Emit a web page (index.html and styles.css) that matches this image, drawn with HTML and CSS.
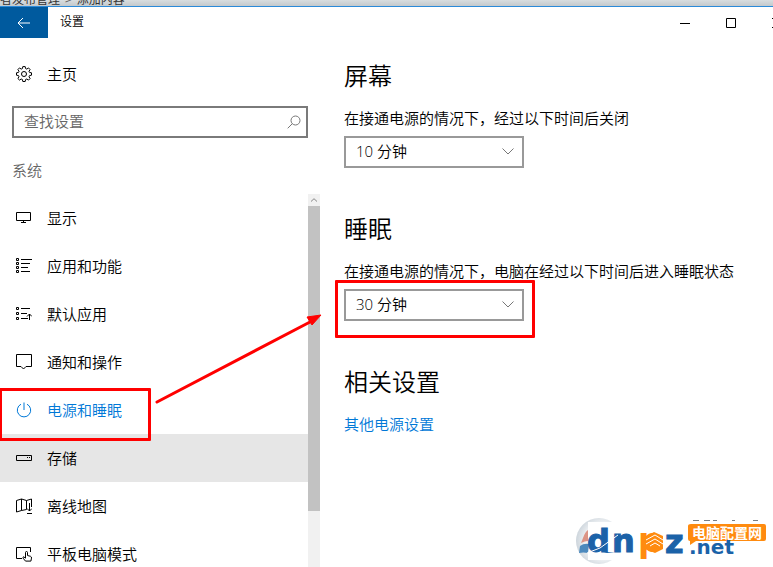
FILE: index.html
```html
<!DOCTYPE html>
<html lang="zh-CN">
<head>
  <meta charset="UTF-8" />
  <meta name="viewport" content="width=device-width, initial-scale=1.0" />
  <title>设置</title>
  <link rel="stylesheet" href="styles.css">
</head>
<body>
  <div class="backdrop"><span>者发布管理</span><span class="crumb">&gt;</span><span>添加内容</span></div>
  <div class="window">
    <header class="titlebar">
      <button class="back" type="button" aria-label="返回">
        <svg width="14" height="12" viewBox="0 0 14 12"><path d="M13 6H1M6 1L1 6l5 5" /></svg>
      </button>
      <span class="title">设置</span>
      <div class="controls">
        <button type="button" aria-label="最小化"><svg width="10" height="10" viewBox="0 0 10 10"><path d="M0 5.500H10" /></svg></button>
        <button type="button" aria-label="最大化"><svg width="10" height="10" viewBox="0 0 10 10"><path d="M.5.500h9v9h-9z" /></svg></button>
        <button type="button" aria-label="关闭"><svg width="10" height="10" viewBox="0 0 10 10"><path d="M0 0L10 10M10 0L0 10" /></svg></button>
      </div>
    </header>

    <div class="columns">
      <aside class="sidebar">
        <a class="item home" href="#">
          <svg class="icon" viewBox="0 0 16 16"><path d="M6.800.6h2.400l.4 2 1.200.5 1.700-1.200 1.600 1.700-1.100 1.700.5 1.100 2 .4v2.400l-2 .4-.5 1.200 1.100 1.700-1.600 1.600-1.700-1.100-1.200.5-.4 2H6.800l-.4-2-1.200-.5-1.700 1.100-1.600-1.600L3 10.800l-.5-1.200-2-.4V6.800l2-.4L3 5.300 1.900 3.600l1.600-1.700 1.700 1.200 1.200-.5z" /><circle cx="8" cy="8" r="2.500" /></svg>
          主页
        </a>
        <form class="search">
          <input type="text" placeholder="查找设置" aria-label="查找设置">
          <button type="button" aria-label="搜索"><svg width="14" height="14" viewBox="0 0 14 14"><circle cx="8.500" cy="5.500" r="4.500" /><path d="M5.300 8.700L.7 13.300" /></svg></button>
        </form>
        <h2 class="group">系统</h2>
        <div class="list">
          <nav>
            <a class="item" href="#">
              <svg class="icon" viewBox="0 0 16 16"><path d="M.5 2.500h14v8H.5zM7.500 11v2M5 12.500h5" /></svg>
              显示
            </a>
            <a class="item" href="#">
              <svg class="icon" viewBox="0 0 16 16"><path d="M.5.500h2v2h-2zM.5 4.500h2v2h-2zM.5 8.500h2v2h-2zM.5 12.500h2v2h-2zM5 1.500h11M5 5.500h9M5 9.500h7M5 13.500h9" /></svg>
              应用和功能
            </a>
            <a class="item" href="#">
              <svg class="icon" viewBox="0 0 16 16"><path d="M.5 1.500h2v2h-2zM.5 6.500h2v2h-2zM.5 11.500h2v2h-2zM5 2.500h9M5 7.500h6M5 12.500h7M13.500 14V8M11 10.500L13.500 8l2.500 2.500" /></svg>
              默认应用
            </a>
            <a class="item" href="#">
              <svg class="icon" viewBox="0 0 16 16"><path d="M.5.500h15v12H10l-2.500 2.500L5 12.500H.5z" /></svg>
              通知和操作
            </a>
            <a class="item active" href="#">
              <svg class="icon" viewBox="0 0 16 16"><path d="M8 .5V8M5 2.200a6.700 6.700 0 1 0 6 0" /></svg>
              电源和睡眠
              <span class="mark mark-item"></span>
            </a>
            <a class="item hover" href="#">
              <svg class="icon" viewBox="0 0 16 16"><path d="M.5 5.500h15v5H.5zM11 7.500h1M13 7.500h1" /></svg>
              存储
            </a>
            <a class="item" href="#">
              <svg class="icon" viewBox="0 0 16 16"><path d="M10.500 11.500L5.500 12.500l-5 1.500V2.500L5.500 1l5 1.500 5-1.500v8M5.500 1v11.500M10.500 2.500v9M13.500 5v8M11 10.500l2.500 2.500 2.500-2.500M11 15.500h5" /></svg>
              离线地图
            </a>
            <a class="item" href="#">
              <svg class="icon" viewBox="0 0 16 16"><path d="M6 12.500H.5v-11h14V6M9.500 12V6.500a1 1 0 0 1 2 0v3l3 .8q1.200.5 1 1.800l-.6 3H9.500l-2.500-3q-.4-1.300.8-1.300l1.700 1.500" /></svg>
              平板电脑模式
            </a>
          </nav>
          <div class="scrollbar">
            <button type="button" aria-label="向上滚动"><svg width="6" height="4" viewBox="0 0 6 4"><path d="M0 3.500L3 .7l3 2.800" /></svg></button>
            <div class="thumb"></div>
          </div>
        </div>
      </aside>

      <main class="content">
        <section>
          <h1>屏幕</h1>
          <label for="screenOff">在接通电源的情况下，经过以下时间后关闭</label>
          <div class="dropdown">
            <select id="screenOff"><option>10 分钟</option></select>
            <svg class="chevron" viewBox="0 0 12 7"><path d="M.5.500L6 6 11.500.5" /></svg>
          </div>
        </section>
        <section>
          <h1>睡眠</h1>
          <label for="sleepAfter">在接通电源的情况下，电脑在经过以下时间后进入睡眠状态</label>
          <div class="dropdown">
            <select id="sleepAfter"><option>30 分钟</option></select>
            <svg class="chevron" viewBox="0 0 12 7"><path d="M.5.500L6 6 11.500.5" /></svg>
            <span class="mark mark-select"></span>
          </div>
        </section>
        <section>
          <h1>相关设置</h1>
          <a class="link" href="#">其他电源设置</a>
        </section>
      </main>
    </div>
  </div>

  <!-- arrow from the menu item to the sleep time -->
  <svg class="arrow" viewBox="0 0 168 92"><path class="shaft" d="M3 88L156 8" /><path class="head" d="M167 1l-9 10-5-8z" /></svg>

  <svg class="logo" viewBox="0 0 198 50" role="img" aria-label="dnpz.net 电脑配置网">
    <defs>
      <radialGradient id="globe" cx="60%" cy="50%" r="60%">
        <stop offset="0.500" stop-color="#fff" />
        <stop offset="1" stop-color="#cdd5dc" />
      </radialGradient>
    </defs>
    <circle cx="24" cy="24" r="23" fill="url(#globe)" />
    <path d="M13 5h36v38H13z" fill="#fff" />
    <path d="M8 21q2-6 5-8v11q-3 0-7 2z" fill="#dc9485" />
    <path d="M5 29q4-3 9-2l-1 9q-5-1-9 0z" fill="#4c89bd" />
    <g class="logo-name">
      <text x="12" y="35">d</text>
      <text x="37" y="35">n</text>
      <text x="90" y="36">z</text>
    </g>
    <path d="M29 35h11l-8 1z" fill="#1b62a8" />
    <path d="M12 36l13-5 18-13" stroke="#fff" stroke-width="1" fill="none" />
    <text class="logo-p" x="63" y="35">p</text>
    <path d="M70 20l9-5 9 4v13l-8 4-10-4z" fill="#ff8b0f" />
    <path d="M71 23l9-5 8 5M71 27l9-5 8 5M75 29l5-3 5 3" stroke="#fff" fill="none" />
    <path d="M118 3.500h6M129 3.500h6M138 3.500h4M157 3.500h3M178 3.500h5" stroke="#777f87" />
    <path d="M116 7h73q2 0 2 2v13q0 2-2 2h-68l-6 4v-4q-2 0-2-2V9q0-2 3-2z" fill="#ff8b0f" />
    <text class="logo-net" x="114" y="37">.net</text>
    <text class="logo-tag" x="117" y="21">电脑配置网</text>
  </svg>
</body>
</html>
```
FILE: styles.css
```css
* {
  box-sizing: border-box;
}
body {
  margin: 0;
  height: 100vh;
  overflow: hidden;
  position: relative;
  display: flex;
  flex-direction: column;
  background: #fff;
  color: #000;
  font-family: "Noto Sans CJK SC", sans-serif;
  font-size: 15px;
  font-weight: 350;
  line-height: 20px;
}
button {
  display: flex;
  align-items: center;
  justify-content: center;
  padding: 0;
  border: 0;
  background: none;
}
svg {
  fill: none;
  stroke: currentColor;
}
a {
  color: inherit;
  text-decoration: none;
}
.backdrop {
  display: flex;
  align-items: flex-end;
  gap: 5px;
  height: 6px;
  overflow: hidden;
  background: linear-gradient(#d8dddf, #c3c9cc);
  color: #333;
  font-size: 12px;
  font-weight: 400;
  line-height: 14px;
}
.crumb {
  color: #666;
}
.window {
  flex: 1;
  min-height: 0;
  display: flex;
  flex-direction: column;
  border-top: 1px solid #2b8ad8;
}
.titlebar {
  display: flex;
  height: 31px;
  overflow: hidden;
}
.back {
  width: 48px;
  background: #005a9e;
  color: #fff;
}
.title {
  flex: 1;
  padding-left: 12px;
  font-size: 12px;
  line-height: 28px;
}
.controls {
  display: flex;
  margin-right: -27px;
}
.controls button {
  width: 46px;
  color: #000;
}
.columns {
  flex: 1;
  min-height: 0;
  display: flex;
}
.sidebar {
  width: 320px;
  flex-shrink: 0;
  display: flex;
  flex-direction: column;
  padding-top: 12px;
}
.item {
  position: relative;
  display: flex;
  align-items: center;
  gap: 15px;
  height: 48px;
  padding-left: 16px;
}
.icon {
  width: 16px;
  height: 16px;
}
.search {
  display: flex;
  flex-shrink: 0;
  height: 32px;
  margin: 8px 12px 0;
  border: 2px solid #7a7a7a;
}
.search input {
  flex: 1;
  min-width: 0;
  padding: 0 10px 2px;
  border: 0;
  outline: 0;
  background: none;
  font: inherit;
}
.search input::placeholder {
  color: #666;
}
.search button {
  width: 24px;
  color: #777;
}
.group {
  margin: 22px 12px 14px;
  color: #666;
  font-size: 15px;
  font-weight: inherit;
}
.list {
  flex: 1;
  min-height: 0;
  display: flex;
}
.list nav {
  flex: 1;
}
.active {
  color: #0078d7;
}
.active::before {
  content: "";
  position: absolute;
  left: 0;
  top: 12px;
  width: 2px;
  height: 24px;
  background: #0078d7;
}
.hover {
  background: #e6e6e6;
}
.scrollbar {
  width: 12px;
  background: #f1f1f1;
}
.scrollbar button {
  width: 12px;
  height: 12px;
  color: #888;
}
.thumb {
  height: 305px;
  background: #c2c2c2;
}
.content {
  flex: 1;
  padding: 21px 24px 0;
}
.content section {
  height: 153px;
}
.content h1 {
  margin: 0 0 17px;
  font-size: 24px;
  font-weight: inherit;
  line-height: 32px;
}
.content label {
  display: block;
  margin-bottom: 8px;
  white-space: nowrap;
}
.dropdown {
  position: relative;
  width: 180px;
  height: 32px;
}
.dropdown select {
  appearance: none;
  width: 100%;
  height: 100%;
  padding: 0 10px 2px;
  border: 2px solid #999;
  border-radius: 0;
  background: #fff;
  color: #000;
  font: inherit;
  font-family: "Open Sans", "Noto Sans CJK SC", sans-serif;
}
.chevron {
  position: absolute;
  right: 10px;
  top: 12px;
  width: 12px;
  height: 7px;
  color: #777;
}
.link {
  color: #0078d7;
}
.mark {
  position: absolute;
  z-index: 1;
  border: 3px solid #f00;
  border-radius: 1px;
  pointer-events: none;
}
.mark-item {
  left: -1px;
  top: 2px;
  width: 152px;
  height: 53px;
}
.mark-select {
  left: -9px;
  top: -9px;
  width: 200px;
  height: 58px;
}
.arrow {
  position: absolute;
  left: 154px;
  top: 314px;
  width: 168px;
  height: 92px;
  pointer-events: none;
}
.shaft {
  stroke: #f00;
  stroke-width: 3;
  stroke-linecap: round;
}
.head {
  fill: #f00;
  stroke: #f00;
}
.logo {
  position: absolute;
  right: 0;
  bottom: 0;
  width: 198px;
  height: 50px;
  stroke: none;
}
.logo text {
  fill: #1b62a8;
  font-family: "DejaVu Sans", sans-serif;
  font-weight: bold;
}
.logo-name text {
  font-size: 32px;
  stroke: #1b62a8;
  stroke-width: 1;
}
.logo .logo-p {
  fill: #ff8b0f;
  font-size: 33px;
}
.logo .logo-net {
  font-size: 20px;
}
.logo .logo-tag {
  fill: #fff;
  font-family: "Noto Sans CJK SC", sans-serif;
  font-size: 14px;
}
```
